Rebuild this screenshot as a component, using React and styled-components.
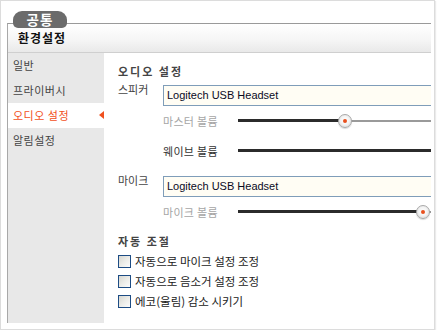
import React from 'react';
import styled, { createGlobalStyle, css } from 'styled-components';

const GlobalStyle = createGlobalStyle`
  html, body {
    margin: 0;
    padding: 0;
    background: #fff;
  }
  body {
    font-family: "Noto Sans CJK KR", "Liberation Sans", sans-serif;
    font-size: 11px;
    color: #333;
  }
`;

const Frame = styled.div`
  box-sizing: border-box;
  width: 435px;
  height: 330px;
  border: 1px solid #dcdcdc;
  box-shadow: 1px 1px 1px #ebebeb;
  padding: 22px 0 0 6px;
`;

const Panel = styled.div`
  position: relative;
  box-sizing: border-box;
  width: 424px;
  height: 300px;
  border-top: 1px solid #9a9a9a;
  border-left: 1px solid #a8a8a8;
  display: flex;
  flex-direction: column;
`;

const Tab = styled.div`
  position: absolute;
  top: -13px;
  left: 5px;
  width: 54px;
  height: 17px;
  border-radius: 9px 9px 5px 5px;
  background: #6b6b6b;
  color: #fff;
  font-weight: bold;
  font-size: 13.5px;
  line-height: 17px;
  text-align: center;
  letter-spacing: 1px;
`;

const Header = styled.div`
  height: 28px;
  flex: none;
  border-bottom: 1px solid #cfcfcf;
  background: linear-gradient(180deg, #ffffff 0%, #f6f6f6 55%, #e9e9e9 100%);
  padding-left: 10px;
  font-size: 12px;
  font-weight: bold;
  color: #111;
  line-height: 28px;
  letter-spacing: 1px;
`;

const Body = styled.div`
  flex: 1;
  display: flex;
  min-height: 0;
`;

const Sidebar = styled.div`
  width: 96px;
  flex: none;
  background: #e8e8e8;
`;

const NavItem = styled.div`
  position: relative;
  height: 25px;
  line-height: 25px;
  padding-left: 5px;
  color: #444;
  letter-spacing: 0.5px;
  ${(p) => p.$active && css`
    background: #fff;
    color: #f25022;
    &::after {
      content: '';
      position: absolute;
      right: 0;
      top: 8px;
      border-right: 5px solid #f0501e;
      border-top: 4.5px solid transparent;
      border-bottom: 4.5px solid transparent;
    }
  `}
`;

const Content = styled.div`
  flex: 1;
  overflow: hidden;
  padding: 10px 0 0 14px;
  display: flex;
  flex-direction: column;
`;

const SectionTitle = styled.div`
  font-weight: bold;
  color: #444;
  line-height: 16px;
  letter-spacing: 2px;
  margin-top: ${(p) => p.$gap || 0}px;
`;

const DeviceRow = styled.div`
  display: flex;
  align-items: flex-start;
  margin-top: ${(p) => p.$gap || 0}px;
`;

const DeviceLabel = styled.div`
  width: 45px;
  flex: none;
  line-height: 14px;
  margin-top: -3px;
  color: #444;
`;

const DeviceSelect = styled.div`
  flex: 1;
  margin-right: -20px;
  box-sizing: border-box;
  height: 21px;
  border: 1px solid #7f9db9;
  background: #fffdf4;
  font-family: "Liberation Sans", Arial, sans-serif;
  font-size: 11px;
  line-height: 19px;
  padding-left: 3px;
  color: #0a0a1e;
`;

const SliderRow = styled.div`
  display: flex;
  align-items: center;
  height: 30px;
  padding-left: 45px;
`;

const SliderLabel = styled.div`
  width: 75px;
  flex: none;
  letter-spacing: 0.3px;
  color: ${(p) => (p.$dim ? '#a5a5a5' : '#333')};
`;

const Track = styled.div`
  position: relative;
  flex: 1;
  height: 14px;
  &::before {
    content: '';
    position: absolute;
    left: 0;
    right: 0;
    top: 6px;
    height: 2px;
    background: #9a9a9a;
  }
`;

const TrackFill = styled.div`
  position: absolute;
  left: 0;
  top: 5px;
  height: 3px;
  background: #2b2b2b;
`;

const Thumb = styled.div`
  position: absolute;
  top: 0;
  width: 14px;
  height: 14px;
  margin-left: -7px;
  box-sizing: border-box;
  border-radius: 50%;
  border: 1px solid #a9a9a9;
  background: radial-gradient(circle at 50% 45%, #ffffff 0%, #f4f4f4 45%, #d0d0d0 100%);
  box-shadow: 0 1px 1px rgba(0, 0, 0, 0.15);
  &::after {
    content: '';
    position: absolute;
    left: 4px;
    top: 4px;
    width: 4px;
    height: 4px;
    border-radius: 50%;
    background: #e8501e;
  }
`;

const CheckRow = styled.label`
  display: flex;
  align-items: center;
  height: 20px;
  gap: 4px;
  font-size: 11.5px;
  color: #222;
`;

const CheckBox = styled.span`
  width: 13px;
  height: 13px;
  flex: none;
  box-sizing: border-box;
  border: 1px solid #1d4c84;
  background: linear-gradient(135deg, #d6d6d0 0%, #ecece8 50%, #fbfbfb 100%);
`;

const CheckList = styled.div`
  margin-top: 2px;
`;

const Slider = ({ label, dim, value }) => (
  <SliderRow>
    <SliderLabel $dim={dim}>{label}</SliderLabel>
    <Track>
      <TrackFill style={{ width: value == null ? '100%' : `${value}%` }} />
      {value != null && <Thumb style={{ left: `${value}%` }} />}
    </Track>
  </SliderRow>
);

const navItems = ['일반', '프라이버시', '오디오 설정', '알림설정'];
const checks = ['자동으로 마이크 설정 조정', '자동으로 음소거 설정 조정', '에코(울림) 감소 시키기'];

export default function App() {
  return (
    <>
      <GlobalStyle />
      <Frame>
        <Panel>
          <Tab>공통</Tab>
          <Header>환경설정</Header>
          <Body>
            <Sidebar>
              {navItems.map((item) => (
                <NavItem key={item} $active={item === '오디오 설정'}>{item}</NavItem>
              ))}
            </Sidebar>
            <Content>
              <SectionTitle>오디오 설정</SectionTitle>
              <DeviceRow $gap={6}>
                <DeviceLabel>스피커</DeviceLabel>
                <DeviceSelect>Logitech USB Headset</DeviceSelect>
              </DeviceRow>
              <Slider label="마스터 볼륨" dim value={55.2} />
              <Slider label="웨이브 볼륨" />
              <DeviceRow $gap={10}>
                <DeviceLabel>마이크</DeviceLabel>
                <DeviceSelect>Logitech USB Headset</DeviceSelect>
              </DeviceRow>
              <Slider label="마이크 볼륨" dim value={95.8} />
              <SectionTitle $gap={6}>자동 조절</SectionTitle>
              <CheckList>
                {checks.map((c) => (
                  <CheckRow key={c}>
                    <CheckBox />
                    {c}
                  </CheckRow>
                ))}
              </CheckList>
            </Content>
          </Body>
        </Panel>
      </Frame>
    </>
  );
}
